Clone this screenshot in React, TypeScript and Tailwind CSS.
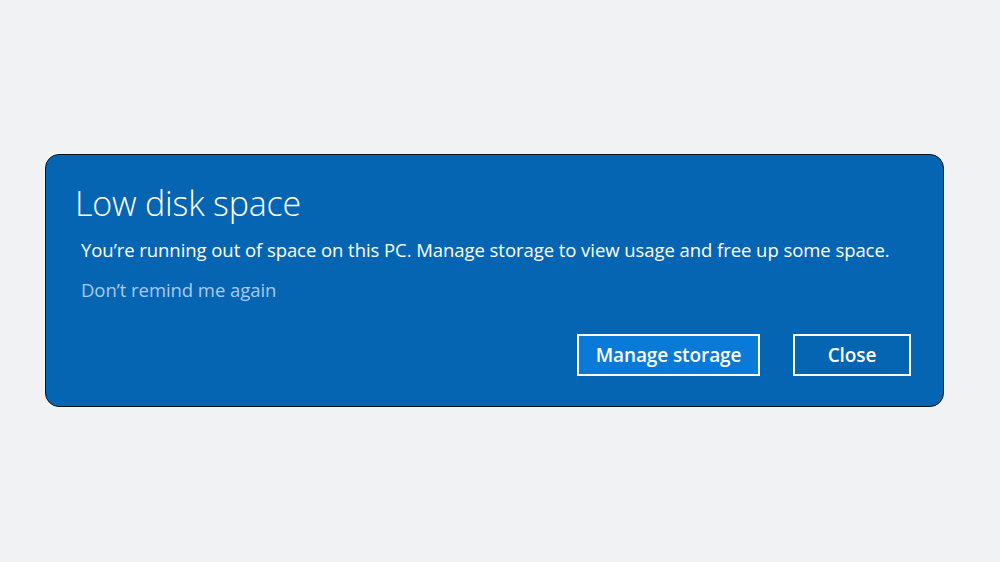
export default function App() {
  return (
    <div
      className="w-[1000px] h-[562px] bg-[#f1f2f4] pt-[154px] pl-[45px]"
      style={{ fontFamily: '"Open Sans", "Noto Sans", sans-serif' }}
    >
      <div className="w-[899px] h-[253px] rounded-[14px] border-[1.5px] border-[#111] bg-[#0565b3] flex flex-col pl-[29px] pr-[32px] pt-[26px]">
        <div className="text-[34px] leading-[44px] font-light text-white tracking-[-0.2px]">Low disk space</div>
        <div className="mt-[13px] ml-[6px] text-[18.5px] leading-[24px] text-white tracking-[-0.06px]">
          You’re running out of space on this PC. Manage storage to view usage and free up some space.
        </div>
        <div className="mt-[16px] ml-[6px] text-[18.5px] leading-[24px] text-[#a9cbee] tracking-[-0.06px]">
          Don’t remind me again
        </div>
        <div className="mt-[32px] flex justify-end gap-[33px]">
          <button className="w-[183px] h-[42px] border-2 border-white bg-[#0a7ad8] text-white text-[19px] font-semibold tracking-[-0.1px]">
            Manage storage
          </button>
          <button className="w-[118px] h-[42px] border-2 border-white bg-[#0565b3] text-white text-[19px] font-semibold tracking-[-0.1px]">
            Close
          </button>
        </div>
      </div>
    </div>
  );
}
